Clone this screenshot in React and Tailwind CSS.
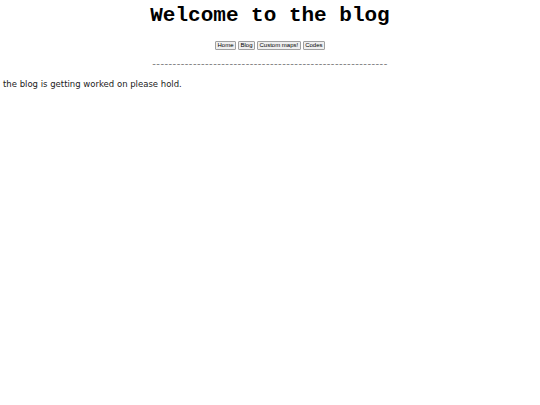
export default function App() {
  const links = ["Home", "Blog", "Custom maps!", "Codes"];

  return (
    <div className="min-h-[405px] bg-white">
      <h1 className="pt-[2px] text-center text-[21px] font-bold leading-[28px] text-black [font-family:'Liberation_Mono',monospace]">
        Welcome to the blog
      </h1>
      <div className="mt-[11px] flex justify-center gap-[2px]">
        {links.map((label) => (
          <button
            key={label}
            className="h-[9px] rounded-[1px] border border-[#a0a0a0] bg-[#efefef] px-[1.5px] text-[6px] leading-[7px] text-black [font-family:'Liberation_Sans',sans-serif]"
          >
            {label}
          </button>
        ))}
      </div>
      <p className="mt-[8px] text-center text-[10px] leading-[12px] tracking-[0.45px] text-[#808080] [font-family:'DejaVu_Sans',sans-serif]">
        ----------------------------------------------------------
      </p>
      <p className="ml-[3px] mt-[8px] text-[8.5px] leading-[12px] text-[#222] [font-family:'DejaVu_Sans',sans-serif]">
        the blog is getting worked on please hold.
      </p>
    </div>
  );
}
